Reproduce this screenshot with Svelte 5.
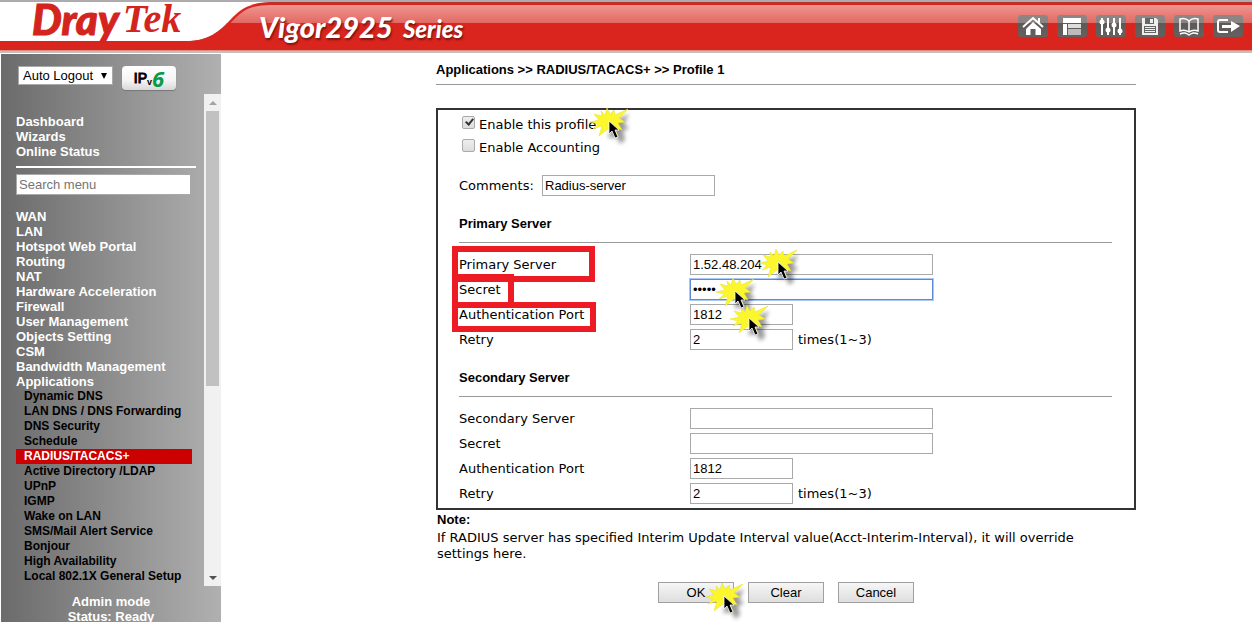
<script>
	const topLinks = ['Dashboard', 'Wizards', 'Online Status'];

	const menu = [
		'WAN', 'LAN', 'Hotspot Web Portal', 'Routing', 'NAT', 'Hardware Acceleration', 'Firewall',
		'User Management', 'Objects Setting', 'CSM', 'Bandwidth Management', 'Applications'
	];

	const applications = [
		'Dynamic DNS', 'LAN DNS / DNS Forwarding', 'DNS Security', 'Schedule', 'RADIUS/TACACS+',
		'Active Directory /LDAP', 'UPnP', 'IGMP', 'Wake on LAN', 'SMS/Mail Alert Service', 'Bonjour',
		'High Availability', 'Local 802.1X General Setup'
	];

	const tools = ['Home', 'Layout', 'Settings', 'Save', 'Manual', 'Logout'];

	let current = $state('RADIUS/TACACS+');
	let enabled = $state(true);
	let accounting = $state(false);
	let comments = $state('Radius-server');

	let servers = $state([
		{ id: 'primary', title: 'Primary Server', host: '1.52.48.204', secret: '12345', port: '1812', retry: '2', guide: true },
		{ id: 'secondary', title: 'Secondary Server', host: '', secret: '', port: '1812', retry: '2', guide: false }
	]);
</script>

{#snippet pointer(x, y)}
	<svg class="pointer" style="left: {x}px; top: {y}px" viewBox="-20 -16 50 42" width="50" height="42" aria-hidden="true">
		<path class="shade" d="M5 0L20-7L15 3L20 7L14 10L16 19L11 23L8 16L-1 17L2 9Z" />
		<path fill="#fbf72c" stroke="#e6dc35" stroke-width=".5" d="M-2-13L1-7L5-11L6-6L19-12L10-3L16 1L9 2L13 9L6 7L9 16L2 9L-1 8L-10 15L-7 5L-16 8L-11 3L-19 1L-10-1L-15-7L-7-5L-8-10L-4-6Z" />
		<path fill="#000" stroke="#fff" stroke-width=".8" d="M0 0V13L3 10L6 17L9 16L6 9H10Z" />
	</svg>
{/snippet}

<div class="page">
	<header>
		<svg class="swoosh" viewBox="0 0 270 54" width="270" height="54" aria-hidden="true">
			<path fill="#fff" d="M0 2H270C248 3 240 9 230 20C220 31 208 41 188 41H0Z" />
			<path fill="none" stroke="#d8261f" stroke-width="2" d="M270 4C250 4 242 9 231 21C221 32 209 42 189 42" />
		</svg>
		<a class="logo" href="#home"><b>Dray</b><i>Tek</i></a>
		<h1>Vigor2925 <small>Series</small></h1>
		<nav class="tools" aria-label="Tools">
			{#each tools as tool}
				<a href="#{tool}" aria-label={tool}>
					<svg viewBox="0 0 30 22" width="30" height="22" aria-hidden="true">
						{#if tool === 'Home'}
							<path fill="#fff" d="M15 7L23 14V20H17.500V14H12.500V20H8V14Z" />
							<path fill="none" stroke="#fff" stroke-width="2" d="M5 12L15 3L25 12M21 8V3" />
						{:else if tool === 'Layout'}
							<path fill="#fff" d="M6 3H24V8H6ZM6 9H10V20H6Z" />
							<path fill="#ddd" d="M11 9H24V13H11Z" />
							<path fill="#bbb" d="M11 14H24V20H11Z" />
						{:else if tool === 'Settings'}
							<path stroke="#fff" stroke-width="2" d="M6 3V20M12 3V20M18 3V20M24 3V20" />
							<g fill="#fff">
								<circle cx="6" cy="7" r="2.500" />
								<circle cx="12" cy="15" r="2.500" />
								<circle cx="18" cy="10" r="2.500" />
								<circle cx="24" cy="16" r="2.500" />
							</g>
						{:else if tool === 'Save'}
							<path fill="#eee" d="M7 3H21L23 5V20H7Z" />
							<path fill="#666" d="M10 3H19V9H10ZM9 11H21V18H9Z" />
							<path fill="#eee" d="M15 4H18V8H15ZM10 12H20V13H10ZM10 14H20V15H10ZM10 16H20V17H10Z" />
						{:else if tool === 'Manual'}
							<path fill="none" stroke="#fff" stroke-width="1.500" d="M15 6C12 3 9 3 6 4V16C9 15 12 15 15 17C18 15 21 15 24 16V4C21 3 18 3 15 6ZM15 6V17M6 19C10 17 12 18 15 20C18 18 20 17 24 19" />
						{:else}
							<path fill="none" stroke="#fff" stroke-width="2" d="M15 5H7Q5 5 5 7V15Q5 17 7 17H15" />
							<path fill="#fff" d="M9 10H18V6L27 11L18 17V13H9Z" />
						{/if}
					</svg>
				</a>
			{/each}
		</nav>
	</header>

	<div class="body">
		<aside>
			<div class="session">
				<span class="select">
					<select aria-label="Auto Logout">
						<option>Auto Logout</option>
					</select>
				</span>
				<button class="ipv6" type="button" aria-label="IPv6"><b>IP</b><small>v</small><i>6</i></button>
			</div>

			<div class="scroller">
				<nav class="menu" aria-label="Main menu">
					{#each topLinks as item}
						<a href="#{item}">{item}</a>
					{/each}
					<hr />
					<input type="text" placeholder="Search menu" aria-label="Search menu" />
					{#each menu as item}
						<a href="#{item}">{item}</a>
					{/each}
					{#each applications as item}
						<a class="sub" class:active={item === current} href="#{item}" onclick={() => (current = item)}>{item}</a>
					{/each}
				</nav>
				<div class="scrollbar" aria-hidden="true">
					<span class="arrow up"></span>
					<span class="track"><span class="thumb"></span></span>
					<span class="arrow down"></span>
				</div>
			</div>

			<div class="status">Admin mode<br />Status: Ready</div>
		</aside>

		<main>
			<form onsubmit={(e) => e.preventDefault()}>
				<h2>Applications &gt;&gt; RADIUS/TACACS+ &gt;&gt; Profile 1</h2>

				<div class="panel">
					<div class="check">
						<input id="enable" type="checkbox" bind:checked={enabled} />
						<label for="enable">Enable this profile</label>
						{@render pointer(150, 8)}
					</div>
					<div class="check">
						<input id="accounting" type="checkbox" bind:checked={accounting} />
						<label for="accounting">Enable Accounting</label>
					</div>

					<div class="row comments">
						<label for="comments">Comments:</label>
						<input id="comments" type="text" bind:value={comments} />
					</div>

					{#each servers as server}
						<h3>{server.title}</h3>
						<div class="row">
							<label for="{server.id}-host">{server.title}{#if server.guide}<span class="mark host"></span>{/if}</label>
							<input id="{server.id}-host" type="text" bind:value={server.host} />
							{#if server.guide}{@render pointer(319, 10)}{/if}
						</div>
						<div class="row">
							<label for="{server.id}-secret">Secret{#if server.guide}<span class="mark secret"></span>{/if}</label>
							<input id="{server.id}-secret" class:focused={server.guide} type="password" bind:value={server.secret} />
							{#if server.guide}{@render pointer(276, 14)}{/if}
						</div>
						<div class="row">
							<label for="{server.id}-port">Authentication Port{#if server.guide}<span class="mark port"></span>{/if}</label>
							<input id="{server.id}-port" class="short" type="text" bind:value={server.port} />
							{#if server.guide}{@render pointer(290, 16)}{/if}
						</div>
						<div class="row">
							<label for="{server.id}-retry">Retry</label>
							<input id="{server.id}-retry" class="short" type="text" bind:value={server.retry} />
							<span>times(1~3)</span>
						</div>
					{/each}
				</div>

				<p class="note"><b>Note:</b></p>
				<p>If RADIUS server has specified Interim Update Interval value(Acct-Interim-Interval), it will override settings here.</p>

				<div class="buttons">
					<button type="submit">OK</button>
					<button type="reset">Clear</button>
					<button type="button">Cancel</button>
					{@render pointer(66, 14)}
				</div>
			</form>
		</main>
	</div>
</div>

<style>
	:global(body) {
		background: #fff;
	}

	.page {
		height: 100vh;
		display: flex;
		flex-direction: column;
		overflow: hidden;
		font: 13px/16px 'DejaVu Sans', Verdana, sans-serif;
		color: #000;
	}

	input, select, button {
		box-sizing: border-box;
		margin: 0;
		font: 13px 'Liberation Sans', Arial, sans-serif;
		color: #000;
	}

	header {
		position: relative;
		flex: none;
		display: flex;
		height: 54px;
		box-sizing: border-box;
		padding: 0 9px 0 32px;
		background: linear-gradient(#aeaaae 0 2px, #b8342f 2px 3px, #d9251d 3px 5px, #ef9590 5px, #e36963 23px, #d9251d 23px 50px, #dc8d88 50px 51px, #c4bfb9 51px 53px, #fff 53px);
	}

	.swoosh {
		position: absolute;
		left: 0;
		top: 0;
	}

	.logo {
		position: relative;
		display: flex;
		align-items: center;
		gap: 4px;
		width: 227px;
		height: 38px;
		color: #d3241e;
		text-decoration: none;
	}

	.logo b {
		font: italic 900 42px/50px Lato, sans-serif;
		-webkit-text-stroke: 1px #d3241e;
	}

	.logo i {
		font: italic bold 40px/50px 'Liberation Serif', serif;
	}

	h1 {
		position: relative;
		flex: 1;
		margin: 0;
		font: italic 900 29px/54px Lato, sans-serif;
		color: #fff;
		text-shadow: 1px 2px 2px #7a1510;
	}

	h1 small {
		margin-left: 4px;
		font-size: 24px;
	}

	.tools {
		display: flex;
		gap: 9px;
		padding-top: 15px;
	}

	.tools a {
		height: 22px;
		border-radius: 3px;
		background: linear-gradient(#8f8684, #898382 8px, #5e5957 8px, #66605e);
	}

	.tools svg {
		display: block;
	}

	.body {
		flex: 1;
		min-height: 0;
		display: flex;
	}

	aside {
		flex: none;
		width: 220px;
		margin-left: 1px;
		display: flex;
		flex-direction: column;
		background: linear-gradient(to right, #6b6b6b, #b0b0b0);
		font: bold 13px/15px 'Liberation Sans', Arial, sans-serif;
		color: #fff;
	}

	.session {
		display: flex;
		align-items: flex-start;
		gap: 9px;
		height: 28px;
		padding: 12px 0 0 17px;
	}

	.select {
		position: relative;
	}

	.select::after {
		content: '';
		position: absolute;
		right: 6px;
		top: 7px;
		border: 3px solid transparent;
		border-top: 6px solid #000;
		border-bottom: 0;
		pointer-events: none;
	}

	select {
		display: block;
		width: 95px;
		height: 19px;
		padding: 0 0 0 4px;
		appearance: none;
		border: 1px solid #a9a9a9;
		border-radius: 0;
		background: #fff;
	}

	.ipv6 {
		display: flex;
		justify-content: center;
		align-items: center;
		width: 54px;
		height: 24px;
		padding: 0;
		border: 0;
		border-radius: 4px;
		background: linear-gradient(#fff, #f4f4f4 60%, #d8d8d8);
		box-shadow: 0 1px 1px #777;
	}

	.ipv6 b {
		font: 14px/16px 'Liberation Sans', Arial, sans-serif;
		-webkit-text-stroke: 1px #000;
	}

	.ipv6 small {
		padding-top: 8px;
		font: bold 9px/12px 'Liberation Sans', Arial, sans-serif;
	}

	.ipv6 i {
		font: italic bold 22px/22px 'Open Sans', sans-serif;
		color: #0a9a48;
	}

	.scroller {
		flex: 1;
		min-height: 0;
		display: flex;
	}

	.menu {
		flex: 1;
		padding: 20px 12px 0 15px;
		overflow: hidden;
	}

	.menu a {
		display: block;
		color: #fff;
		text-decoration: none;
	}

	.menu hr {
		height: 2px;
		margin: 7px -4px 6px 0;
		border: 0;
		background: #fff;
	}

	.menu input {
		display: block;
		width: 175px;
		height: 21px;
		margin-bottom: 14px;
		padding: 0 2px;
		border: 1px solid #a9a9a9;
	}

	.menu input::placeholder {
		color: #757575;
	}

	.menu .sub {
		padding-left: 8px;
		font-size: 12px;
		color: #000;
	}

	.menu .active {
		background: #c00;
		color: #fff;
	}

	.scrollbar {
		flex: none;
		width: 17px;
		display: flex;
		flex-direction: column;
		background: #f1f1f1;
	}

	.arrow {
		display: flex;
		justify-content: center;
		align-items: center;
		height: 17px;
	}

	.arrow::before {
		content: '';
		border: 4px solid transparent;
	}

	.up::before {
		border-top: 0;
		border-bottom-color: #a3a3a3;
	}

	.down::before {
		border-bottom: 0;
		border-top-color: #505050;
	}

	.track {
		flex: 1;
		padding: 0 2px;
	}

	.thumb {
		display: block;
		height: 60%;
		background: #c1c1c1;
	}

	.status {
		height: 28px;
		padding-top: 8px;
		text-align: center;
	}

	main {
		flex: 1;
		padding: 8px 0 0 99px;
	}

	form {
		max-width: 700px;
		margin: 0 auto;
	}

	h2, h3 {
		margin: 0;
		font: bold 13px/16px 'Liberation Sans', Arial, sans-serif;
	}

	h2 {
		padding-bottom: 6px;
		border-bottom: 1px solid #999;
	}

	h3 {
		margin: 13px 0 9px;
		padding-bottom: 6px;
		border-bottom: 1px solid #999;
		line-height: 25px;
	}

	.panel {
		margin-top: 23px;
		padding: 3px 22px 2px 21px;
		border: 2px solid #333;
	}

	.check, .row {
		position: relative;
		display: flex;
		align-items: center;
	}

	.check {
		height: 23px;
		gap: 4px;
		padding-left: 3px;
	}

	.check input {
		position: relative;
		width: 13px;
		height: 13px;
		margin-bottom: 4px;
		appearance: none;
		border: 1px solid #aaa;
		border-radius: 2px;
		background: linear-gradient(#eee, #ddd);
	}

	.check input:checked::after {
		content: '';
		position: absolute;
		left: 4px;
		top: 0;
		width: 3px;
		height: 6px;
		border: solid #333;
		border-width: 0 2px 2px 0;
		transform: rotate(40deg);
	}

	.row {
		height: 25px;
	}

	.row label {
		position: relative;
		width: 231px;
		line-height: 25px;
	}

	.row input {
		width: 243px;
		height: 21px;
		padding: 0 2px;
		border: 1px solid #a9a9a9;
		outline: 0;
	}

	.row .short {
		width: 103px;
		margin-right: 5px;
	}

	.row .focused, .row input:focus {
		border-color: #5b8bd8;
		box-shadow: 0 0 0 1px #a9c8f5;
	}

	.comments {
		margin-top: 14px;
	}

	.row.comments label {
		width: 83px;
	}

	.row.comments input {
		width: 173px;
	}

	.mark {
		position: absolute;
		left: -7px;
		box-sizing: border-box;
		border: 6px solid #ed1c24;
		pointer-events: none;
	}

	.host {
		top: -6px;
		width: 143px;
		height: 36px;
	}

	.secret {
		top: -3px;
		width: 62px;
		height: 34px;
	}

	.port {
		top: 0;
		width: 144px;
		height: 30px;
	}

	.pointer {
		position: absolute;
		z-index: 1;
		margin: -16px 0 0 -20px;
		pointer-events: none;
	}

	.shade {
		fill: #000;
		opacity: 0.4;
		filter: blur(2px);
	}

	p {
		margin: 0 20px 0 1px;
	}

	.note {
		margin: 2px 0 2px 1px;
		font-family: 'Liberation Sans', Arial, sans-serif;
	}

	.buttons {
		position: relative;
		display: flex;
		gap: 14px;
		width: fit-content;
		margin: 20px auto 0;
	}

	.buttons button {
		width: 76px;
		height: 21px;
		padding: 0;
		border: 1px solid #a0a0a0;
		background: linear-gradient(#f6f6f6, #dedede);
	}
</style>
